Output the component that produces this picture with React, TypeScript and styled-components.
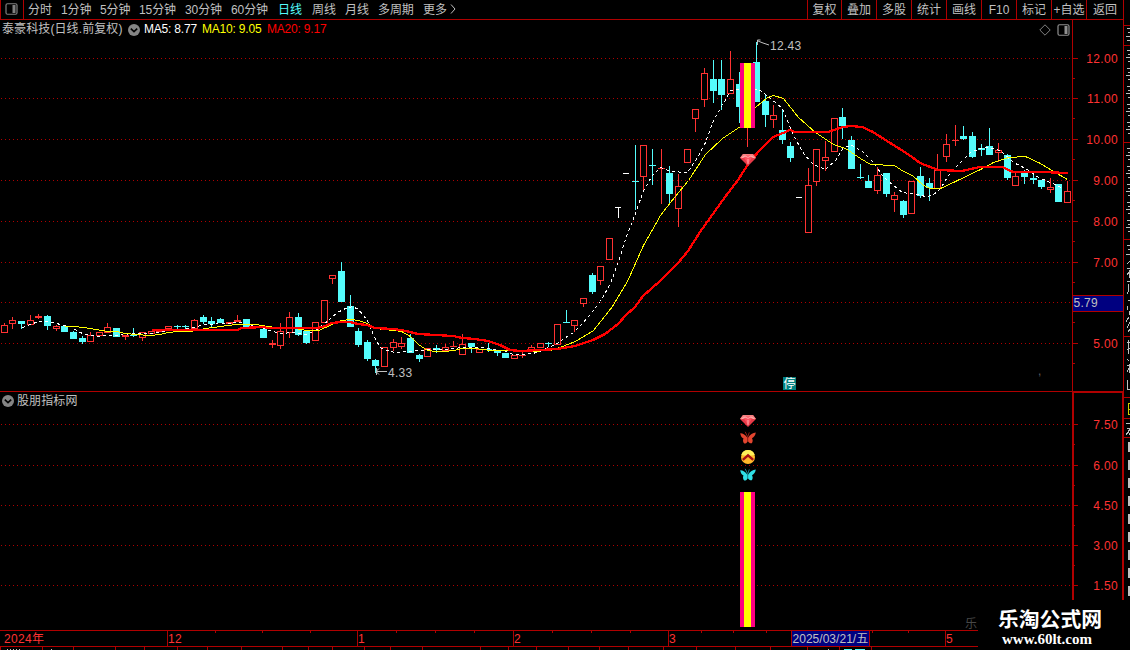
import * as React from "react";
import styled, { createGlobalStyle, css } from "styled-components";

const colors = {
  line: "#b00000",
  up: "#ff3232",
  down: "#54fcfc",
  text: "#c0c0c0",
  pink: "#ff0080",
  yellow: "#ffff00",
  navy: "#000080"
};

const sans = `"Liberation Sans", "Noto Sans CJK SC", sans-serif`;

// x centre, high, body top, body bottom, low, kind
type Candle = [number, number, number, number, number, "r" | "c" | "w"];

const candles: Candle[] = [
  [4, 323, 325, 332, 332, "r"],
  [12, 317, 320, 323, 328, "r"],
  [21, 321, 321, 323, 328, "c"],
  [30, 315, 320, 324, 324, "r"],
  [38, 314, 316, 317, 318, "r"],
  [47, 315, 316, 325, 329, "c"],
  [56, 325, 326, 328, 330, "r"],
  [64, 326, 326, 331, 331, "c"],
  [73, 331, 332, 338, 338, "c"],
  [82, 336, 338, 341, 343, "c"],
  [90, 332, 335, 341, 341, "r"],
  [99, 332, 332, 335, 335, "r"],
  [107, 323, 327, 332, 332, "r"],
  [116, 328, 328, 336, 336, "c"],
  [125, 335, 335, 336, 339, "r"],
  [133, 328, 335, 335, 336, "c"],
  [142, 332, 332, 337, 340, "r"],
  [151, 331, 331, 333, 333, "r"],
  [159, 330, 330, 331, 331, "r"],
  [168, 326, 326, 328, 328, "r"],
  [177, 325, 326, 326, 328, "c"],
  [185, 325, 326, 326, 328, "c"],
  [194, 319, 320, 328, 328, "r"],
  [203, 315, 317, 321, 323, "c"],
  [211, 317, 321, 323, 326, "c"],
  [220, 318, 319, 322, 322, "c"],
  [229, 322, 322, 323, 323, "r"],
  [237, 315, 320, 321, 321, "r"],
  [246, 319, 319, 327, 327, "c"],
  [254, 326, 327, 327, 327, "r"],
  [263, 326, 329, 337, 337, "c"],
  [272, 340, 343, 344, 347, "r"],
  [280, 323, 331, 345, 348, "r"],
  [289, 312, 317, 332, 337, "r"],
  [298, 313, 317, 334, 335, "c"],
  [306, 330, 331, 342, 343, "c"],
  [315, 322, 322, 340, 340, "r"],
  [324, 300, 300, 322, 322, "r"],
  [332, 275, 275, 278, 283, "r"],
  [341, 262, 271, 301, 301, "c"],
  [350, 295, 306, 326, 326, "c"],
  [358, 328, 331, 344, 346, "c"],
  [367, 340, 342, 358, 360, "c"],
  [375, 359, 360, 365, 372, "c"],
  [384, 347, 347, 366, 366, "r"],
  [393, 339, 342, 347, 350, "r"],
  [401, 337, 343, 346, 348, "r"],
  [410, 334, 338, 352, 352, "c"],
  [419, 354, 355, 358, 361, "c"],
  [427, 348, 348, 356, 356, "r"],
  [436, 345, 348, 349, 352, "c"],
  [445, 344, 347, 350, 350, "r"],
  [453, 341, 346, 346, 346, "r"],
  [462, 334, 344, 354, 354, "r"],
  [471, 343, 343, 346, 352, "c"],
  [479, 349, 349, 352, 352, "r"],
  [488, 343, 349, 349, 351, "c"],
  [497, 350, 350, 352, 355, "c"],
  [505, 353, 353, 357, 357, "c"],
  [514, 355, 355, 358, 358, "r"],
  [522, 351, 355, 355, 357, "r"],
  [531, 345, 347, 350, 350, "r"],
  [540, 343, 343, 347, 347, "r"],
  [548, 342, 343, 343, 346, "c"],
  [557, 324, 324, 344, 344, "r"],
  [566, 310, 322, 322, 322, "c"],
  [574, 320, 320, 325, 331, "r"],
  [583, 298, 298, 303, 306, "r"],
  [592, 273, 275, 291, 293, "c"],
  [600, 266, 266, 280, 284, "r"],
  [609, 238, 238, 259, 259, "r"],
  [618, 207, 207, 207, 217, "w"],
  [626, 173, 173, 173, 173, "w"],
  [635, 145, 181, 181, 209, "c"],
  [643, 145, 145, 176, 189, "r"],
  [652, 149, 165, 165, 184, "c"],
  [661, 149, 168, 168, 203, "r"],
  [669, 166, 173, 193, 203, "c"],
  [678, 174, 186, 208, 226, "r"],
  [687, 149, 149, 162, 162, "r"],
  [695, 109, 109, 118, 131, "r"],
  [704, 68, 73, 99, 106, "r"],
  [713, 60, 79, 90, 102, "c"],
  [721, 60, 79, 94, 109, "c"],
  [730, 51, 79, 93, 93, "r"],
  [739, 72, 84, 106, 122, "c"],
  [747, 64, 64, 127, 146, "r"],
  [756, 42, 62, 101, 101, "c"],
  [765, 94, 101, 114, 126, "c"],
  [773, 105, 115, 119, 127, "r"],
  [782, 109, 130, 139, 143, "c"],
  [790, 142, 146, 157, 161, "c"],
  [799, 197, 197, 197, 197, "w"],
  [808, 168, 185, 232, 232, "r"],
  [816, 149, 149, 181, 185, "r"],
  [825, 141, 157, 160, 170, "r"],
  [834, 118, 118, 151, 151, "r"],
  [842, 108, 117, 125, 138, "c"],
  [851, 136, 140, 168, 168, "c"],
  [860, 164, 177, 177, 178, "c"],
  [868, 175, 181, 187, 187, "c"],
  [877, 167, 175, 190, 193, "r"],
  [886, 173, 173, 193, 196, "c"],
  [894, 192, 195, 199, 211, "r"],
  [903, 200, 201, 214, 217, "c"],
  [911, 181, 181, 213, 213, "r"],
  [920, 167, 176, 195, 197, "c"],
  [929, 178, 183, 187, 200, "c"],
  [937, 154, 170, 188, 188, "r"],
  [946, 134, 144, 156, 161, "r"],
  [955, 125, 140, 140, 145, "r"],
  [963, 126, 136, 138, 139, "c"],
  [972, 132, 136, 156, 157, "c"],
  [981, 144, 148, 149, 155, "c"],
  [989, 128, 146, 154, 154, "c"],
  [998, 143, 150, 152, 161, "r"],
  [1007, 154, 155, 177, 179, "c"],
  [1015, 172, 176, 185, 185, "r"],
  [1024, 170, 173, 176, 183, "c"],
  [1033, 175, 178, 179, 183, "c"],
  [1041, 180, 180, 186, 188, "c"],
  [1050, 178, 187, 189, 192, "r"],
  [1058, 184, 184, 201, 201, "c"],
  [1067, 181, 191, 202, 202, "r"]
];

const ma5 =
  "22,327 30,324 38,321 47,321 56,323 64,325 70,326 76,330 82,333 90,335 99,336 107,335 116,335 125,334 130,333 150,333 159,332 168,330 177,329 190,328 200,325 207,324 224,323 240,322 246,324 254,326 263,328 272,331 281,333 292,332 300,333 306,334 315,330 323,324 330,318 337,312 345,308 352,306 358,309 367,320 371,330 376,341 381,348 390,351 395,352 405,351 418,350 432,349 444,349 462,347 475,347 483,347 493,349 505,351 513,354 525,354 537,352 548,347 557,343 562,339 573,332 583,322 593,310 600,301 610,283 618,261 626,236 635,213 643,190 652,175 660,167 670,171 687,172 697,157 705,142 713,120 722,105 730,90 740,89 755,89 760,90 770,98 782,108 792,133 803,153 813,164 825,169 835,160 843,147 852,145 863,152 873,162 882,175 888,181 902,192 917,194 925,196 932,195 940,188 948,175 960,162 970,152 983,147 995,148 1003,153 1013,162 1025,168 1038,177 1050,182 1063,188";
const ma10 =
  "64,326 75,326 90,328 107,331 116,331 125,333 135,334 150,335 159,334 168,332 177,331 190,331 205,328 220,326 235,324 255,324 268,326 280,328 295,328 306,330 318,330 325,327 333,323 341,320 350,319 358,320 367,323 375,328 393,330 401,331 410,336 418,344 427,350 436,351 444,351 453,350 462,348 475,348 490,350 510,350 530,351 550,350 562,346 575,341 593,330 612,306 627,281 643,245 660,215 670,202 688,180 705,154 722,138 740,126 755,107 767,97 773,95 783,98 798,117 815,132 833,144 845,148 860,158 870,164 894,165 903,171 912,175 923,185 930,188 940,188 955,181 980,169 993,162 1008,157 1025,156 1040,163 1053,171 1067,179";
const ma20 =
  "152,330 237,330 242,328 263,327 268,328 318,328 325,326 332,323 341,322 350,322 358,324 367,325 375,328 393,329 401,330 410,332 418,334 436,335 453,336 462,338 475,339 488,341 500,345 510,350 520,351 540,350 557,349 575,346 593,340 605,334 618,324 626,315 635,307 643,296 660,281 678,263 688,251 700,232 725,197 738,180 750,161 762,148 773,137 783,133 790,130 795,132 828,132 843,127 851,126 862,127 873,132 887,141 903,151 912,157 920,163 938,170 962,171 980,167 1002,167 1013,172 1042,172 1068,173";

const periods = [
  { label: "分时", width: 33 },
  { label: "1分钟", width: 39 },
  { label: "5分钟", width: 39 },
  { label: "15分钟", width: 46 },
  { label: "30分钟", width: 46 },
  { label: "60分钟", width: 47 },
  { label: "日线", width: 34, active: true },
  { label: "周线", width: 33 },
  { label: "月线", width: 33 },
  { label: "多周期", width: 45 },
  { label: "更多", width: 27 }
];

const tools = ["复权", "叠加", "多股", "统计", "画线", "F10", "标记", "+自选", "返回"];

const priceTicks = [
  { y: 58, label: "12.00" },
  { y: 98, label: "11.00" },
  { y: 139, label: "10.00" },
  { y: 180, label: "9.00" },
  { y: 221, label: "8.00" },
  { y: 262, label: "7.00" },
  { y: 302, label: "" },
  { y: 343, label: "5.00" }
];

const signalTicks = [
  { y: 424, label: "7.50" },
  { y: 465, label: "6.00" },
  { y: 505, label: "4.50" },
  { y: 545, label: "3.00" },
  { y: 585, label: "1.50" }
];

const months = [
  { x: 167, label: "12" },
  { x: 357, label: "1" },
  { x: 513, label: "2" },
  { x: 668, label: "3" },
  { x: 945, label: "5" }
];
const weeks = [215, 262, 310, 396, 435, 474, 552, 591, 630, 701, 733, 766, 872, 908];
const tabs = [0, 42, 73, 115, 144, 177, 207, 241, 282, 308, 332, 364, 390, 422, 480, 508, 536, 568, 599, 628, 663, 696, 735, 770, 807, 839, 871];

const GlobalStyle = createGlobalStyle`
  body {
    margin: 0;
    background: #000;
    overflow: hidden;
  }
  svg {
    display: block;
  }
`;

const Screen = styled.div`
  position: relative;
  display: grid;
  grid-template-columns: 1124px 6px;
  width: 1130px;
  height: 650px;
  overflow: hidden;
  background: #000;
  color: ${colors.text};
  font: 12px/19px ${sans};
  white-space: nowrap;
`;

const Terminal = styled.main`
  display: grid;
  grid-template-rows: 20px 371px 239px 20px;
`;

const Toolbar = styled.nav`
  display: flex;
  box-sizing: border-box;
  border-bottom: 1px solid ${colors.line};
  line-height: 21px;
`;

const PanelToggle = styled.div`
  box-sizing: border-box;
  width: 24px;
  padding: 3px 0 0 4px;
  margin-right: 4px;
  border: solid ${colors.line};
  border-width: 0 1px;
`;

const Period = styled.span<{ $width: number; $active?: boolean }>`
  width: ${p => p.$width}px;
  letter-spacing: -0.1px;
  color: ${p => (p.$active ? colors.down : colors.text)};
`;

const Tools = styled.div`
  display: flex;
  margin-left: auto;
  border-right: 1px solid ${colors.line};
`;

const Tool = styled.span`
  box-sizing: border-box;
  width: 35px;
  height: 19px;
  border-left: 1px solid ${colors.line};
  text-align: center;

  &:first-child {
    width: 34px;
  }
  &:last-child {
    width: 37px;
  }
`;

const Panel = styled.section`
  display: grid;
  grid-template-columns: 1072px 52px;
`;

const PanelHeader = styled.header<{ $lower?: boolean }>`
  display: flex;
  align-items: center;
  box-sizing: border-box;
  height: 19px;
  padding-left: 2px;
  line-height: 21px;
  ${p =>
    p.$lower &&
    css`
      border-top: 1px solid ${colors.line};
      line-height: 19px;
    `}
`;

const StockName = styled.span`
  width: 126px;
  letter-spacing: 0.1px;
`;

const Indicator = styled.span<{ $color: string; $width: number }>`
  width: ${p => p.$width}px;
  color: ${p => p.$color};
  letter-spacing: -0.2px;
`;

const Indicators = styled.div`
  display: flex;
  margin-left: 4px;
`;

const IndicatorName = styled.span`
  margin-left: 3px;
  letter-spacing: 0.1px;
`;

const HeaderActions = styled.div`
  display: flex;
  align-items: center;
  gap: 6px;
  margin: 0 2px 0 auto;
`;

const SideStrip = styled.aside`
  overflow: hidden;
`;

const ScaleText = styled.text`
  fill: ${colors.up};
  font: 12px ${sans};
  letter-spacing: 0.35px;
`;

const NoteText = styled.text`
  fill: ${colors.text};
  font: 12px ${sans};
  letter-spacing: 0.3px;
`;

const Brand = styled.div`
  position: absolute;
  left: 978px;
  top: 600px;
  box-sizing: border-box;
  width: 152px;
  height: 50px;
  padding: 6px 8px 0 0;
  background: #000;
  color: #fff;
  text-align: center;
`;

const BrandName = styled.div`
  font: bold 20.8px/25px "Noto Sans CJK SC", sans-serif;
`;

const BrandSite = styled.div`
  margin-right: 6px;
  font: bold 15px/16px "Liberation Serif", serif;
`;

const PanelIcon = ({ color = "#808080" }: { color?: string }) => (
  <svg width="13" height="12" viewBox="0 0 13 12">
    <rect x="1" y="0.75" width="11" height="10.5" rx="1.5" fill="none" stroke={color} strokeWidth="1.2" />
    <rect x="7.5" y="2" width="3" height="8" fill={color} />
  </svg>
);

const Chevron = () => (
  <svg width="12" height="12" viewBox="0 0 12 12">
    <circle cx="6" cy="6" r="6" fill="#858585" />
    <path d="M2.8 4.6 6 7.6l3.2-3" fill="none" stroke="#000" strokeWidth="1.6" />
  </svg>
);

const Gem = ({ x, y }: { x: number; y: number }) => (
  <g transform={`translate(${x} ${y})`}>
    <path d="M3 0h10l3 4-8 8L0 4z" fill="#e83a48" />
    <path d="M3 0h10l3 4H0z" fill="#f58080" />
    <path d="M4 3.5 6 1.5h4l2 2L8 10z" fill="#ff5260" />
    <path d="M1.5 3.8 5 2l3 1.4L11 2l3.5 1.8M8 5v5" fill="none" stroke="#ffc4c0" strokeWidth="0.8" />
  </g>
);

const Butterfly = ({ y, fill, dark }: { y: number; fill: string; dark: string }) => (
  <g transform={`translate(740 ${y})`}>
    <path
      d="M7.2 6.500C5.500 3.800 3 2.300.2 2.200c.4 2.700 1.600 4.600 3.300 5.200-.9 1.600-.6 3.600.8 5.200 1.700 0 2.900-1.100 3.500-2.700 1 1.600 2.200 2.500 4 2.300 1.200-1.500 1.100-3.500.2-4.900 2-.9 3.400-2.800 3.800-5.700C12.800 1.900 10 3.600 8.200 6.500z"
      fill={fill}
    />
    <path d="M7.700 10V6L5.200.8M7.700 6 9.300 1.400" fill="none" stroke={dark} strokeWidth="1" />
  </g>
);

const Coin = () => (
  <g>
    <circle cx="748" cy="457" r="7" fill="#ffb92b" />
    <path d="M741.3 455a7 7 0 0 1 13.400 0l-6.700 1z" fill="#fff05a" />
    <path d="m742.800 459.800 5.200-4.500 5.200 4.500" fill="none" stroke="#a80f12" strokeWidth="2.400" />
  </g>
);

const SignalBar = ({ y, height }: { y: number; height: number }) => (
  <g>
    <rect x="740" y={y} width="15" height={height} fill={colors.pink} />
    <rect x="744" y={y} width="7" height={height} fill={colors.yellow} />
  </g>
);

const CandleMark = ({ data }: { data: Candle }) => {
  const [x, high, top, bottom, low, kind] = data;
  const color = kind === "r" ? colors.up : kind === "c" ? colors.down : "#fff";
  const hollow = kind === "r" && bottom - top > 1;
  return (
    <g fill={color}>
      {high < top && <rect x={x} y={high} width="1" height={top - high} />}
      {low > bottom && <rect x={x} y={bottom} width="1" height={low - bottom + 1} />}
      {hollow ? (
        <rect x={x - 2.5} y={top + 0.5} width="6" height={bottom - top} fill="#000" stroke={color} />
      ) : (
        <rect x={x - 3} y={top} width={kind === "w" ? 6 : 7} height={bottom - top + 1} />
      )}
    </g>
  );
};

const GridLine = ({ y }: { y: number }) => (
  <path d={`M1 ${y + 0.5}H1071`} stroke={colors.line} strokeDasharray="1 3" />
);

const PriceChart = () => (
  <svg width="1072" height="352" viewBox="0 39 1072 352" shapeRendering="crispEdges">
    {priceTicks.map(t => (
      <GridLine key={t.y} y={t.y} />
    ))}
    {candles.map(c => (
      <CandleMark key={c[0]} data={c} />
    ))}
    <g fill="none">
      <polyline points={ma5} stroke="#fff" strokeDasharray="3 3" transform="translate(0.5 0.5)" />
      <polyline points={ma10} stroke={colors.yellow} transform="translate(0.5 0.5)" />
      <polyline points={ma20} stroke="#ff0000" strokeWidth="2.3" strokeLinejoin="round" />
    </g>
    <SignalBar y={63} height={65} />
    <g shapeRendering="auto">
      <Gem x={740} y={154} />
      <path
        d="M757.500 45v-5h3M758 41l5 2 6 2M376.500 375v-7M376 371.500h11M376 371.500l3-3M376 371.500l3 3"
        fill="none"
        stroke={colors.text}
      />
      <NoteText x="770" y="50">12.43</NoteText>
      <NoteText x="388" y="377">4.33</NoteText>
      <NoteText x="1038" y="375" fillOpacity="0.5">,</NoteText>
      <rect x="783" y="377" width="13" height="13" fill="#008080" />
      <text x="783.500" y="388" fill="#fff" fontSize="12">停</text>
    </g>
  </svg>
);

const PriceScale = () => (
  <svg width="52" height="371" viewBox="1072 20 52 371">
    <g stroke={colors.line} shapeRendering="crispEdges">
      <path d="M1072.500 20V391M1123.500 20V391" />
      {priceTicks.map(t => (
        <path key={t.y} d={`M1073 ${t.y + 0.5}h5M1073 ${t.y + 20.5}h2`} />
      ))}
    </g>
    {priceTicks.map(t => (
      <ScaleText key={t.y} x="1118" y={t.y + 5} textAnchor="end">{t.label}</ScaleText>
    ))}
    <rect x="1073" y="295" width="50" height="17" fill={colors.navy} />
    <path d="M1073 295.500h50M1073 311.500h50" stroke={colors.line} />
    <NoteText x="1073.500" y="307">5.79</NoteText>
  </svg>
);

const SignalChart = () => (
  <svg width="1072" height="220" viewBox="0 410 1072 220">
    <g shapeRendering="crispEdges">
      {signalTicks.map(t => (
        <GridLine key={t.y} y={t.y} />
      ))}
      <SignalBar y={492} height={135} />
    </g>
    <Gem x={740} y={415} />
    <Butterfly y={431} fill="#e2452f" dark="#8c1d14" />
    <Coin />
    <Butterfly y={468} fill="#2fdfe4" dark="#16868e" />
    <text x="965" y="628" fill="#484848" fontSize="12">乐</text>
  </svg>
);

const SignalScale = () => (
  <svg width="52" height="239" viewBox="1072 391 52 239">
    <g stroke={colors.line} shapeRendering="crispEdges">
      <path d="M1073 600V392H1123V600" fill="none" strokeWidth="2" />
      {signalTicks.map(t => (
        <path key={t.y} d={`M1074 ${t.y + 0.5}h4M1074 ${t.y + 20.5}h1`} />
      ))}
    </g>
    {signalTicks.map(t => (
      <ScaleText key={t.y} x="1118" y={t.y + 5} textAnchor="end">{t.label}</ScaleText>
    ))}
  </svg>
);

const TimeScale = () => (
  <svg width="1124" height="20" viewBox="0 630 1124 20">
    <g stroke={colors.line} shapeRendering="crispEdges">
      <path d="M0 630.500H978M0 646.500H978" />
      {months.map(m => (
        <path key={m.x} d={`M${m.x + 0.5} 631v15`} />
      ))}
      {weeks.map(x => (
        <path key={x} d={`M${x + 0.5} 631v2`} />
      ))}
      {tabs.map(x => (
        <path key={x} d={`M${x + 0.5} 647v3`} />
      ))}
      <rect x="791.500" y="630.500" width="78" height="16" fill={colors.navy} />
    </g>
    <ScaleText x="4" y="643">2024年</ScaleText>
    {months.map(m => (
      <ScaleText key={m.x} x={m.x + 1} y="643">{m.label}</ScaleText>
    ))}
    <NoteText x="792.500" y="642.500" textLength="76">2025/03/21/五</NoteText>
    <path d="M7 649.500h14M51 649.500h2M828 649.500h2" stroke={colors.text} strokeDasharray="1 2" />
    <path d="M844 649.500h8M855 649.500h10" stroke={colors.down} />
  </svg>
);

const SideMarks = () => (
  <svg width="6" height="650" viewBox="1124 0 6 650" shapeRendering="crispEdges">
    <path
      d="M1124 25.500h6M1124 45.500h6M1124 142.500h6M1124 239.500h6M1124 336.500h6M1124 397.500h6M1124 418.500h6M1124 437.500h6"
      stroke={colors.line}
    />
    <g stroke={colors.text} fill="none">
      <path d="M1127 28.500h3M1128 32.500h2M1126 36.500h4M1127 40.500h3" />
      {[50, 68, 86, 104, 122, 148, 166, 184, 202, 220].map(y => (
        <path key={y} d={`M1127 ${y + 0.5}h3M1128 ${y + 4.5}h2M1126 ${y + 7.5}h4M1128 ${y + 11.5}h2v3`} />
      ))}
      <path d="M1127 245.500h3M1128 249.500h2M1126 254.500h4M1127 264l3-3M1127 268.500h3M1127 275l2-3M1129.500 270v8M1127 281.500h3M1128 284v8l-1 2M1128 300.500h2M1128 306l-1 4M1129.500 311v4M1126 322l3-5M1127 328l3-6M1128 332l2-3" />
      <path d="M1127 342.500h3M1128.500 340v14M1127 350l3-2M1127 359l2 2M1127 365.500h3M1127 372l2-4M1129.500 364v9M1127.500 380v9h3" />
      <path d="M1126 423.500h4M1127 428.500h3M1130 429l-4 6M1128 431l2 4" />
    </g>
    <path d="M1128.500 403v12M1128 403.500h2M1128 409.500h2M1128 414.500h2" stroke="#d0d000" />
    {[442, 460, 478, 496, 514, 532, 550, 568, 586].map(y => (
      <path key={y} d={`M1129 ${y}v10M1128 ${y + 1.5}h2`} stroke={colors.text} strokeWidth="2" />
    ))}
  </svg>
);

const App = () => {
  return (
    <Screen>
      <GlobalStyle />
      <Terminal>
        <Toolbar>
          <PanelToggle>
            <PanelIcon />
          </PanelToggle>
          {periods.map(p => (
            <Period key={p.label} $width={p.width} $active={p.active}>
              {p.label}
            </Period>
          ))}
          <svg width="8" height="19" viewBox="0 0 8 19">
            <path d="m1 4.500 4 4.500-4 4.500" fill="none" stroke={colors.text} />
          </svg>
          <Tools>
            {tools.map(label => (
              <Tool key={label}>{label}</Tool>
            ))}
          </Tools>
        </Toolbar>
        <Panel>
          <div>
            <PanelHeader>
              <StockName>泰豪科技(日线.前复权)</StockName>
              <Chevron />
              <Indicators>
                <Indicator $color="#fff" $width={58}>MA5: 8.77</Indicator>
                <Indicator $color={colors.yellow} $width={65}>MA10: 9.05</Indicator>
                <Indicator $color="#ff0000" $width={60}>MA20: 9.17</Indicator>
              </Indicators>
              <HeaderActions>
                <svg width="12" height="12" viewBox="0 0 12 12">
                  <path d="m6 .8 5.200 5.200L6 11.200.8 6z" fill="none" stroke="#808080" />
                </svg>
                <PanelIcon color="#909090" />
              </HeaderActions>
            </PanelHeader>
            <PriceChart />
          </div>
          <PriceScale />
        </Panel>
        <Panel>
          <div>
            <PanelHeader $lower>
              <Chevron />
              <IndicatorName>股朋指标网</IndicatorName>
            </PanelHeader>
            <SignalChart />
          </div>
          <SignalScale />
        </Panel>
        <TimeScale />
      </Terminal>
      <SideStrip>
        <SideMarks />
      </SideStrip>
      <Brand>
        <BrandName>乐淘公式网</BrandName>
        <BrandSite>www.60lt.com</BrandSite>
      </Brand>
    </Screen>
  );
};

export default App;
